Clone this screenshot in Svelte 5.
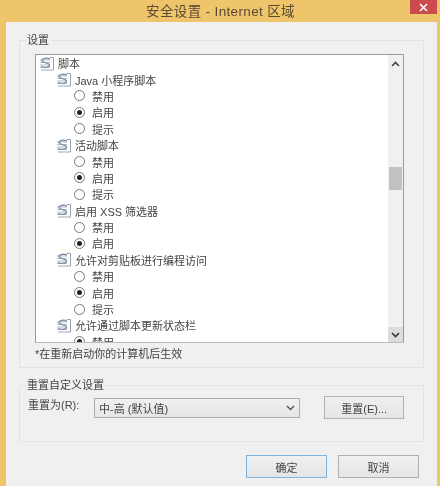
<script lang="ts">
  const rows = [
    { type: 'group', depth: 0, label: '脚本' },
    { type: 'group', depth: 1, label: 'Java 小程序脚本' },
    { type: 'radio', label: '禁用' },
    { type: 'radio', label: '启用', checked: true },
    { type: 'radio', label: '提示' },
    { type: 'group', depth: 1, label: '活动脚本' },
    { type: 'radio', label: '禁用' },
    { type: 'radio', label: '启用', checked: true },
    { type: 'radio', label: '提示' },
    { type: 'group', depth: 1, label: '启用 XSS 筛选器' },
    { type: 'radio', label: '禁用' },
    { type: 'radio', label: '启用', checked: true },
    { type: 'group', depth: 1, label: '允许对剪贴板进行编程访问' },
    { type: 'radio', label: '禁用' },
    { type: 'radio', label: '启用', checked: true },
    { type: 'radio', label: '提示' },
    { type: 'group', depth: 1, label: '允许通过脚本更新状态栏' },
    { type: 'radio', label: '禁用', checked: true }
  ];
</script>

<div class="window">
  <header class="titlebar">
    <span class="title">安全设置 - Internet 区域</span>
    <span class="close">
      <svg width="9" height="9" viewBox="0 0 9 9"><path d="M1 1l7 7M8 1L1 8" stroke="#fff" stroke-width="1.5" fill="none" /></svg>
    </span>
  </header>

  <div class="body">
    <fieldset class="settings">
      <legend>设置</legend>
      <div class="listbox">
        <div class="rows">
          {#each rows as row}
            {#if row.type === 'group'}
              <div class="row" class:sub={row.depth === 1}>
                <svg class="icon" width="16" height="15" viewBox="0 0 16 15">
                  <path d="M11 1.5h3.5v12.5H11" fill="#fff" stroke="#9aa2aa" />
                  <path d="M1 4h10M1 6.5h10M1 9h10M1 11.5h10" stroke="#b4bcc6" />
                  <path d="M11 3C7.5 1.6 3 2.4 3 4.5c0 2.4 7.5 1.8 7.5 4.6 0 2.4-4.5 2.8-8.5 1.6" fill="none" stroke="#7d92aa" stroke-width="1.4" />
                  <path d="M2 14h9" stroke="#a2aab2" />
                </svg>
                <span>{row.label}</span>
              </div>
            {:else}
              <div class="row option">
                <span class="radio" class:checked={row.checked}></span>
                <span>{row.label}</span>
              </div>
            {/if}
          {/each}
        </div>
        <div class="scrollbar">
          <svg width="9" height="6" viewBox="0 0 9 6"><path d="M1 5l3.5-3.5L8 5" fill="none" stroke="#444" stroke-width="1.6" /></svg>
          <div class="thumb"></div>
          <div class="down">
            <svg width="9" height="6" viewBox="0 0 9 6"><path d="M1 1l3.5 3.5L8 1" fill="none" stroke="#333" stroke-width="1.6" /></svg>
          </div>
        </div>
      </div>
      <p class="note">*在重新启动你的计算机后生效</p>
    </fieldset>

    <fieldset class="reset">
      <legend>重置自定义设置</legend>
      <div class="reset-row">
        <span class="reset-label">重置为(R):</span>
        <div class="select">
          <span>中-高 (默认值)</span>
          <svg width="9" height="6" viewBox="0 0 9 6"><path d="M1 1l3.5 3.5L8 1" fill="none" stroke="#555" stroke-width="1.5" /></svg>
        </div>
        <button class="btn reset-btn">重置(E)...</button>
      </div>
    </fieldset>

    <div class="actions">
      <button class="btn primary">确定</button>
      <button class="btn">取消</button>
    </div>
  </div>
</div>

<style>
  :global(body) {
    margin: 0;
    background: #efc56c;
  }

  .window {
    width: 440px;
    height: 486px;
    box-sizing: border-box;
    display: flex;
    flex-direction: column;
    background: #efc56c;
    padding: 0 3px 0 6px;
    color: #444;
    font-family: "Liberation Sans", "Noto Sans CJK SC", sans-serif;
    font-size: 11px;
    overflow: hidden;
    filter: blur(0.35px);
  }

  .titlebar {
    height: 22px;
    flex: none;
    position: relative;
    display: flex;
    align-items: center;
    justify-content: center;
    font-size: 13.5px;
    color: #5a4a32;
    padding: 0 2px 3px 0;
    box-sizing: border-box;
  }

  .title {
    letter-spacing: 0.35px;
  }

  .close {
    position: absolute;
    top: 0;
    right: 0;
    width: 27px;
    height: 14px;
    background: #cb4b4f;
    display: flex;
    align-items: center;
    justify-content: center;
  }

  .body {
    flex: 1;
    background: #f0f0f0;
    padding: 0 13px;
    display: flex;
    flex-direction: column;
  }

  fieldset {
    margin: 0;
    border: 1px solid #e3e3e3;
    min-width: 0;
  }

  legend {
    padding: 0 2px 0 1px;
    line-height: 14px;
    font-size: 11px;
    color: #444;
  }

  .settings {
    margin-top: 11px;
    height: 335px;
    flex: none;
    box-sizing: border-box;
    padding: 7px 19px 0 15px;
  }

  .settings legend {
    margin-left: -9px;
  }

  .listbox {
    height: 289px;
    box-sizing: border-box;
    border: 1px solid #9a9a9a;
    border-bottom-color: #bdbdbd;
    background: #fff;
    display: flex;
    overflow: hidden;
  }

  .rows {
    flex: 1;
    padding: 0 0 0 3px;
    overflow: hidden;
  }

  .row {
    height: 16.4px;
    display: flex;
    align-items: center;
    gap: 3px;
    white-space: nowrap;
  }

  .row.sub {
    padding-left: 17px;
  }

  .row.option {
    padding-left: 35px;
    gap: 7px;
  }

  .radio {
    width: 11px;
    height: 11px;
    flex: none;
    box-sizing: border-box;
    border: 1px solid #777;
    border-radius: 50%;
    background: #fff;
    display: flex;
    align-items: center;
    justify-content: center;
  }

  .radio.checked::after {
    content: "";
    width: 5px;
    height: 5px;
    border-radius: 50%;
    background: #222;
  }

  .scrollbar {
    width: 15px;
    flex: none;
    background: #f0f0f0;
    display: flex;
    flex-direction: column;
    align-items: center;
    padding-top: 6px;
    box-sizing: border-box;
  }

  .thumb {
    width: 13px;
    height: 23px;
    margin-top: 100px;
    background: #c1c1c1;
  }

  .down {
    margin-top: auto;
    width: 100%;
    height: 15px;
    background: #dcdcdc;
    display: flex;
    align-items: center;
    justify-content: center;
  }

  .note {
    margin: 4px 0 0;
    line-height: 14px;
  }

  .reset {
    margin-top: 10px;
    height: 64px;
    flex: none;
    box-sizing: border-box;
    padding: 0 19px 0 8px;
  }

  .reset legend {
    margin-left: -2px;
  }

  .reset-row {
    display: flex;
    align-items: center;
    margin-top: 4px;
  }

  .reset-label {
    width: 66px;
    flex: none;
    padding-bottom: 7px;
  }

  .select {
    width: 207px;
    height: 20px;
    box-sizing: border-box;
    border: 1px solid #adadad;
    background: linear-gradient(#f0f0f0, #e6e6e6);
    display: flex;
    align-items: center;
    justify-content: space-between;
    padding: 0 4px 0 4px;
  }

  .btn {
    width: 81px;
    height: 23px;
    box-sizing: border-box;
    border: 1px solid #b0b0b0;
    background: linear-gradient(#f0f0f0, #e5e5e5);
    color: #444;
    font: inherit;
    padding: 0;
  }

  .reset-btn {
    width: 80px;
    margin-left: 24px;
  }

  .primary {
    border-color: #7eb4dc;
  }

  .actions {
    display: flex;
    justify-content: flex-end;
    gap: 11px;
    margin-top: 13px;
    padding-right: 5px;
  }
</style>
